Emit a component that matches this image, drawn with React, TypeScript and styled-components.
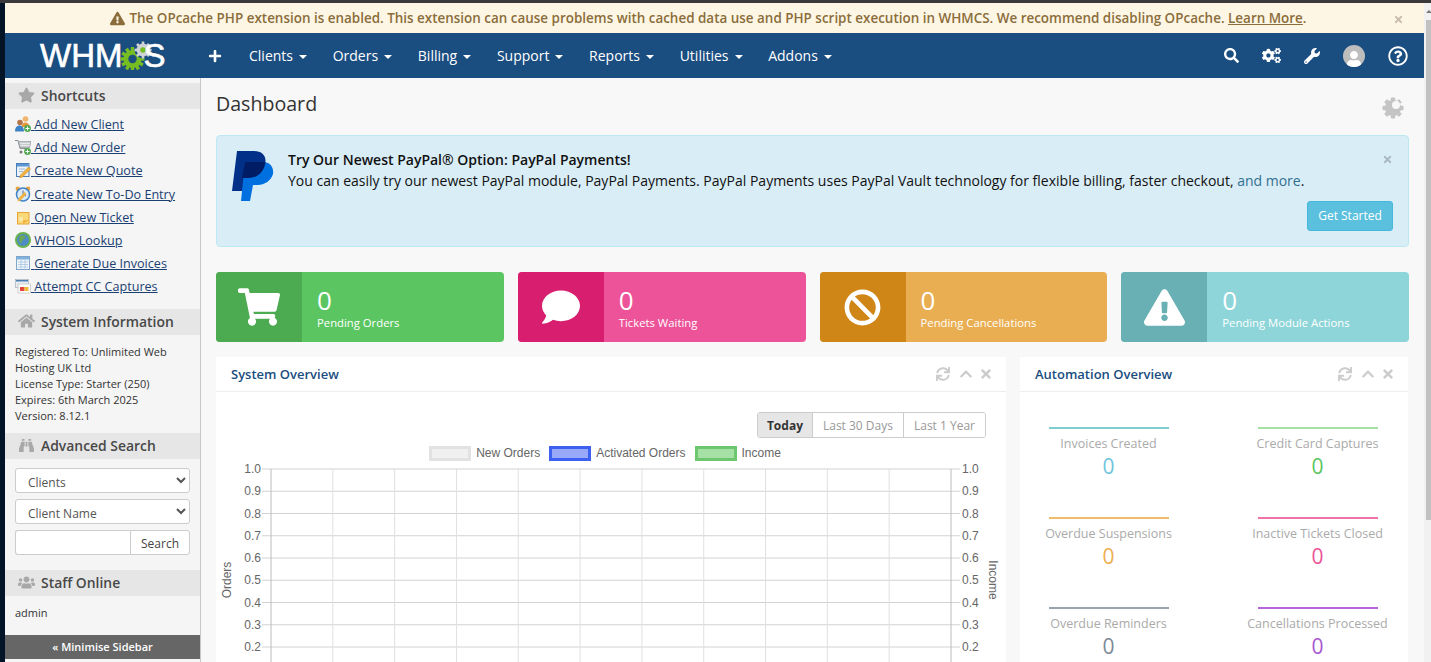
import React from "react";
import styled, { createGlobalStyle } from "styled-components";
import {
  FaPlus,
  FaSearch,
  FaCogs,
  FaWrench,
  FaRegQuestionCircle,
  FaStar,
  FaHome,
  FaBinoculars,
  FaUsers,
  FaShoppingCart,
  FaComment,
  FaBan,
  FaExclamationTriangle,
  FaSync,
  FaChevronUp,
  FaTimes,
  FaUser,
} from "react-icons/fa";

const GlobalStyle = createGlobalStyle`
  html, body {
    margin: 0;
    height: 100%;
    overflow: hidden;
    background: #f8f8f8;
    font-family: "Open Sans", "Liberation Sans", sans-serif;
    font-size: 13px;
    color: #333;
  }
  * { box-sizing: border-box; }
`;

const shortcuts = [
  { label: "Add New Client", icon: "client" },
  { label: "Add New Order", icon: "order" },
  { label: "Create New Quote", icon: "quote" },
  { label: "Create New To-Do Entry", icon: "todo" },
  { label: "Open New Ticket", icon: "ticket" },
  { label: "WHOIS Lookup", icon: "whois" },
  { label: "Generate Due Invoices", icon: "invoice" },
  { label: "Attempt CC Captures", icon: "cc" },
];

const navItems = ["Clients", "Orders", "Billing", "Support", "Reports", "Utilities", "Addons"];

const stats = [
  { label: "Pending Orders", dark: "#4cab50", light: "#5bc661", icon: <FaShoppingCart size={42} /> },
  { label: "Tickets Waiting", dark: "#d81e6e", light: "#ec5398", icon: <FaComment size={38} /> },
  { label: "Pending Cancellations", dark: "#d08617", light: "#e9ae52", icon: <FaBan size={37} /> },
  { label: "Pending Module Actions", dark: "#69b0b5", light: "#8dd5d8", icon: <FaExclamationTriangle size={41} /> },
];

const automation = [
  { label: "Invoices Created", color: "#7ecdd1", value: "#70c4dc" },
  { label: "Credit Card Captures", color: "#a5e0a5", value: "#5bc661" },
  { label: "Overdue Suspensions", color: "#f0bc6c", value: "#eeae52" },
  { label: "Inactive Tickets Closed", color: "#ef72a8", value: "#ec5398" },
  { label: "Overdue Reminders", color: "#9aa3ab", value: "#7c8a96" },
  { label: "Cancellations Processed", color: "#b565d8", value: "#a957d0" },
];

const yTicks = ["1.0", "0.9", "0.8", "0.7", "0.6", "0.5", "0.4", "0.3", "0.2"];
const gearAngles = [0, 45, 90, 135];
const greenAngles = [0, 30, 60, 90, 120, 150];

function ShortcutIcon({ kind }: { kind: string }) {
  switch (kind) {
    case "client":
      return (
        <svg width="16" height="16" viewBox="0 0 16 16">
          <circle cx="10.5" cy="3" r="2.8" fill="#eeb56c" />
          <path d="M6.5 11c0-3 2-4.5 4-4.5s4 1.5 4 4.5z" fill="#e8963a" />
          <circle cx="5" cy="6.5" r="2.8" fill="#b5764a" />
          <path d="M0 15.5c0-4 2-6 4.5-6s4.5 2 4.5 6z" fill="#3f83c6" />
          <circle cx="12.5" cy="12.5" r="3.4" fill="#4fa84f" />
          <path d="M12 10.5h1v1.5h1.5v1h-1.5v1.5h-1v-1.5h-1.5v-1h1.5z" fill="#fff" />
        </svg>
      );
    case "order":
      return (
        <svg width="16" height="16" viewBox="0 0 16 16">
          <path d="M0 1.5h3l2 8h8" fill="none" stroke="#8b8f92" strokeWidth="1" />
          <path d="M3.5 2.5h12.5l-1.5 6h-9.5z" fill="#c9ccce" stroke="#8b8f92" strokeWidth="0.6" />
          <path d="M5 4.5h10M5.5 6.5h9" stroke="#f2f2f2" strokeWidth="0.7" />
          <circle cx="6" cy="13" r="1.5" fill="#777" />
          <circle cx="12.5" cy="12.5" r="3.4" fill="#4fa84f" />
          <path d="M12 10.5h1v1.5h1.5v1h-1.5v1.5h-1v-1.5h-1.5v-1h1.5z" fill="#fff" />
        </svg>
      );
    case "quote":
      return (
        <svg width="16" height="16" viewBox="0 0 16 16">
          <rect x="1.5" y="1.5" width="12.5" height="13" fill="#eaf2fb" stroke="#4a7fb8" />
          <rect x="2" y="2" width="11.5" height="2.5" fill="#5b95d2" />
          <path d="M4 7h6M4 9.5h4" stroke="#9fb9d6" />
          <path d="M13.5 5l2 2-8 8-3 1 1-3z" fill="#efb23e" stroke="#c98a22" strokeWidth="0.5" />
        </svg>
      );
    case "todo":
      return (
        <svg width="16" height="16" viewBox="0 0 16 16">
          <circle cx="2.8" cy="2.8" r="2.2" fill="#e8a33a" />
          <circle cx="13" cy="2.8" r="2.2" fill="#e8a33a" />
          <circle cx="8" cy="8.5" r="6.5" fill="#dbeafa" stroke="#3f83c6" strokeWidth="1.5" />
          <path d="M8 4.5v4l3 1.5" fill="none" stroke="#4a6a8a" />
          <path d="M9.5 6l2 2-6 6.5-3 1 1-3z" fill="#efb23e" />
        </svg>
      );
    case "ticket":
      return (
        <svg width="16" height="16" viewBox="0 0 16 16">
          <rect x="2.5" y="3.5" width="11.5" height="11.5" fill="#f9d877" stroke="#e8a33a" />
          <path d="M8 15v-4h6z" fill="#f3b43f" />
          <rect x="4" y="8" width="4" height="4" fill="#fbe7a8" />
        </svg>
      );
    case "whois":
      return (
        <svg width="16" height="16" viewBox="0 0 16 16">
          <circle cx="8" cy="8" r="8" fill="#6bb24f" />
          <circle cx="8" cy="8" r="6" fill="#4d8cc4" />
          <path d="M5 4c2-1 4-1 5 .5s-1 3-2 3-.5 3-2 3.5S3 6 5 4z" fill="#6aa75a" />
        </svg>
      );
    case "invoice":
      return (
        <svg width="16" height="16" viewBox="0 0 16 16">
          <rect x="1.5" y="1.5" width="13" height="13" fill="#eef5fb" stroke="#7fa6c9" />
          <rect x="2" y="2" width="12" height="2.5" fill="#7fb2dc" />
          <path d="M3 7h10M3 9.5h10M3 12h10M6 5v8.5M10 5v8.5" stroke="#a9c5dc" strokeWidth="0.8" />
        </svg>
      );
    default:
      return (
        <svg width="16" height="16" viewBox="0 0 16 16">
          <rect x="0.5" y="1.5" width="13" height="8" fill="#e9eef2" stroke="#9aa5ad" strokeWidth="0.6" />
          <rect x="1" y="2" width="12" height="1.5" fill="#4d7fb0" />
          <rect x="3" y="6" width="12.5" height="9" fill="#fff" stroke="#b5b5b5" strokeWidth="0.6" />
          <rect x="5" y="9" width="4.5" height="4" fill="#e0483c" />
          <rect x="9.5" y="9" width="4" height="4" fill="#f0b93a" />
        </svg>
      );
  }
}

function Logo() {
  return (
    <LogoWrap>
      <LogoText>WHM</LogoText>
      <LogoGear width="33" height="29" viewBox="0 0 33 29">
        <g fill="#76bd22">
          <circle cx="12.5" cy="18" r="9" />
          {greenAngles.map((a) => (
            <rect key={a} x="10.8" y="6" width="3.4" height="24" transform={`rotate(${a} 12.5 18)`} />
          ))}
        </g>
        <circle cx="12.5" cy="18" r="4.2" fill="#1a4d80" />
        <circle cx="23" cy="9" r="8.5" fill="#1a4d80" />
        <g fill="#d0d3d6">
          <circle cx="23" cy="9" r="6.5" />
          {gearAngles.map((a) => (
            <rect key={a} x="21.7" y="0.5" width="2.6" height="17" transform={`rotate(${a} 23 9)`} />
          ))}
        </g>
        <circle cx="23" cy="9" r="2.8" fill="#76bd22" />
      </LogoGear>
      <LogoTail>S</LogoTail>
    </LogoWrap>
  );
}

function PayPalMark() {
  return (
    <svg width="42" height="50" viewBox="0 0 42 50">
      <path d="M5 0H22C31 0 35 6 33 13C31 24 24 28 15 28H13L11 40H0Z" fill="#003087" />
      <path d="M13 11H31C38 11 42 16 41 23C39 30 32 34 26 34H21L18 50H9Z" fill="#0070e0" />
      <path d="M13 11H33.5C32 22 25 27 15 27H10Z" fill="#001c64" />
    </svg>
  );
}

function PageCog() {
  return (
    <CogSvg width="22" height="22" viewBox="0 0 22 22">
      <g fill="#c4c4c4">
        <circle cx="11" cy="11" r="8" />
        {gearAngles.map((a) => (
          <rect key={a} x="8.8" y="0.5" width="4.4" height="21" rx="1" transform={`rotate(${a} 11 11)`} />
        ))}
      </g>
      <circle cx="14" cy="8" r="4" fill="#f8f8f8" />
    </CogSvg>
  );
}

function PanelControls() {
  return (
    <Controls>
      <FaSync size={14} />
      <FaChevronUp size={14} />
      <FaTimes size={14} />
    </Controls>
  );
}

function OverviewChart() {
  const width = 790;
  const height = 232;
  const left = 55;
  const right = 735;
  const top = 8;
  const step = 22.25;
  const columns = 11;
  const colWidth = (right - left) / columns;
  return (
    <svg width={width} height={height} viewBox={`0 0 ${width} ${height}`}>
      {yTicks.map((tick, i) => {
        const y = top + step * i;
        return (
          <g key={tick}>
            <line x1={left - 9} x2={right + 9} y1={y} y2={y} stroke="#d2d2d2" />
            <text x={left - 10} y={y + 4} textAnchor="end" fontSize="12" fill="#666" fontFamily="Liberation Sans">{tick}</text>
            <text x={right + 11} y={y + 4} fontSize="12" fill="#666" fontFamily="Liberation Sans">{tick}</text>
          </g>
        );
      })}
      {Array.from({ length: columns + 1 }).map((_, i) => (
        <line
          key={i}
          x1={left + colWidth * i}
          x2={left + colWidth * i}
          y1={top}
          y2={height}
          stroke={i === 0 || i === columns ? "#bbb" : "#e0e0e0"}
        />
      ))}
      <text transform="translate(15 119) rotate(-90)" textAnchor="middle" fontSize="12" fill="#666" fontFamily="Liberation Sans">Orders</text>
      <text transform="translate(773 119) rotate(90)" textAnchor="middle" fontSize="12" fill="#666" fontFamily="Liberation Sans">Income</text>
    </svg>
  );
}

export default function App() {
  return (
    <Frame>
      <GlobalStyle />
      <TopStrip />
      <Window>
        <LeftStrip />
        <Page>
          <Notice>
            <FaExclamationTriangle size={15} />
            <span>
              The OPcache PHP extension is enabled. This extension can cause problems with cached data use and PHP
              script execution in WHMCS. We recommend disabling OPcache. <u>Learn More</u>.
            </span>
            <NoticeClose>
              <FaTimes size={11} />
            </NoticeClose>
          </Notice>
          <Navbar>
            <Logo />
            <AddButton>
              <FaPlus size={14} />
            </AddButton>
            <NavList>
              {navItems.map((item) => (
                <NavItem key={item}>
                  {item}
                  <Caret />
                </NavItem>
              ))}
            </NavList>
            <NavTools>
              <FaSearch size={15} />
              <FaCogs size={19} />
              <FaWrench size={16} />
              <Avatar>
                <FaUser size={16} />
              </Avatar>
              <FaRegQuestionCircle size={20} />
            </NavTools>
          </Navbar>
          <Body>
            <Sidebar>
              <SideHeading>
                <FaStar size={16} />
                Shortcuts
              </SideHeading>
              <ShortcutList>
                {shortcuts.map((item) => (
                  <ShortcutLink key={item.label}>
                    <ShortcutIcon kind={item.icon} /> {item.label}
                  </ShortcutLink>
                ))}
              </ShortcutList>
              <SideHeading>
                <FaHome size={16} />
                System Information
              </SideHeading>
              <SideText>
                Registered To: Unlimited Web Hosting UK Ltd
                <br />
                License Type: Starter (250)
                <br />
                Expires: 6th March 2025
                <br />
                Version: 8.12.1
              </SideText>
              <SideHeading>
                <FaBinoculars size={15} />
                Advanced Search
              </SideHeading>
              <SearchForm>
                <SideSelect defaultValue="Clients">
                  <option>Clients</option>
                </SideSelect>
                <SideSelect defaultValue="Client Name">
                  <option>Client Name</option>
                </SideSelect>
                <SearchRow>
                  <SearchInput />
                  <SearchButton>Search</SearchButton>
                </SearchRow>
              </SearchForm>
              <SideHeading>
                <FaUsers size={17} />
                Staff Online
              </SideHeading>
              <StaffText>admin</StaffText>
              <Minimise>« Minimise Sidebar</Minimise>
            </Sidebar>
            <Content>
              <TitleRow>
                <Title>Dashboard</Title>
                <PageCog />
              </TitleRow>
              <PromoBox>
                <PayPalMark />
                <PromoText>
                  <PromoHeading>Try Our Newest PayPal® Option: PayPal Payments!</PromoHeading>
                  <br />
                  You can easily try our newest PayPal module, PayPal Payments. PayPal Payments uses PayPal Vault
                  technology for flexible billing, faster checkout, <PromoMore>and more</PromoMore>.
                </PromoText>
                <PromoClose>
                  <FaTimes size={11} />
                </PromoClose>
                <PromoButton>Get Started</PromoButton>
              </PromoBox>
              <StatGrid>
                {stats.map((stat) => (
                  <StatCard key={stat.label} $bg={stat.light}>
                    <StatIcon $bg={stat.dark}>{stat.icon}</StatIcon>
                    <StatBody>
                      <StatValue>0</StatValue>
                      <StatLabel>{stat.label}</StatLabel>
                    </StatBody>
                  </StatCard>
                ))}
              </StatGrid>
              <PanelRow>
                <Panel>
                  <PanelHead>
                    <PanelTitle>System Overview</PanelTitle>
                    <PanelControls />
                  </PanelHead>
                  <ChartBody>
                    <RangeGroup>
                      <RangeButton $active>Today</RangeButton>
                      <RangeButton>Last 30 Days</RangeButton>
                      <RangeButton>Last 1 Year</RangeButton>
                    </RangeGroup>
                    <Legend>
                      <LegendItem>
                        <LegendSwatch $border="#e2e2e2" $fill="#f0f0f0" />
                        New Orders
                      </LegendItem>
                      <LegendItem>
                        <LegendSwatch $border="#3e60f0" $fill="#97a9f8" />
                        Activated Orders
                      </LegendItem>
                      <LegendItem>
                        <LegendSwatch $border="#6cc76f" $fill="#a5e0a5" />
                        Income
                      </LegendItem>
                    </Legend>
                    <OverviewChart />
                  </ChartBody>
                </Panel>
                <Panel>
                  <PanelHead>
                    <PanelTitle>Automation Overview</PanelTitle>
                    <PanelControls />
                  </PanelHead>
                  <AutomationGrid>
                    {automation.map((item) => (
                      <AutoStat key={item.label}>
                        <AutoRule $color={item.color} />
                        <AutoLabel>{item.label}</AutoLabel>
                        <AutoValue $color={item.value}>0</AutoValue>
                      </AutoStat>
                    ))}
                  </AutomationGrid>
                </Panel>
              </PanelRow>
            </Content>
          </Body>
        </Page>
        <Scrollbar>
          <ScrollArrow />
          <ScrollThumb />
        </Scrollbar>
      </Window>
    </Frame>
  );
}

const Frame = styled.div`
  height: 662px;
  display: flex;
  flex-direction: column;
  overflow: hidden;
`;

const TopStrip = styled.div`
  height: 3px;
  flex: none;
  background: #3a3a3a;
`;

const Window = styled.div`
  flex: 1;
  min-height: 0;
  display: flex;
`;

const LeftStrip = styled.div`
  width: 5px;
  flex: none;
  background: #041427;
`;

const Page = styled.div`
  flex: 1;
  min-width: 0;
  display: flex;
  flex-direction: column;
`;

const Scrollbar = styled.div`
  width: 7px;
  flex: none;
  background: #f1f1f1;
  display: flex;
  flex-direction: column;
`;

const ScrollArrow = styled.div`
  height: 17px;
  flex: none;
  display: flex;
  align-items: center;
  justify-content: center;
  padding-left: 2px;
  &::after {
    content: "";
    border-left: 3px solid transparent;
    border-right: 3px solid transparent;
    border-bottom: 3px solid #777;
  }
`;

const ScrollThumb = styled.div`
  height: 500px;
  margin-left: 2px;
  background: #c1c1c1;
`;

const Notice = styled.div`
  height: 30px;
  flex: none;
  background: #fef6e4;
  color: #8a6d3b;
  font-size: 13.45px;
  font-weight: 600;
  display: flex;
  align-items: center;
  justify-content: center;
  gap: 4px;
  padding: 0 12px 0 0;
  position: relative;
  white-space: nowrap;
`;

const NoticeClose = styled.span`
  position: absolute;
  right: 20px;
  top: 8px;
  color: #c9bdb0;
`;

const Navbar = styled.div`
  height: 45px;
  flex: none;
  background: #1a4d80;
  color: #fff;
  display: flex;
  align-items: center;
`;

const LogoWrap = styled.div`
  width: 196px;
  height: 100%;
  flex: none;
  padding-left: 35px;
  display: flex;
  align-items: center;
`;

const LogoText = styled.span`
  font-family: "Liberation Sans", sans-serif;
  font-size: 33px;
  line-height: 33px;
  -webkit-text-stroke: 0.6px #fff;
`;

const LogoGear = styled.svg`
  flex: none;
  margin-left: -2px;
`;

const LogoTail = styled(LogoText)`
  margin-left: -10px;
`;

const AddButton = styled.span`
  width: 40px;
  padding-right: 12px;
  display: flex;
  justify-content: center;
`;

const NavList = styled.div`
  display: flex;
  gap: 25.7px;
  margin-left: 8px;
  flex: 1;
`;

const NavItem = styled.span`
  font-size: 14px;
  display: inline-flex;
  align-items: center;
  gap: 6px;
`;

const Caret = styled.i`
  width: 0;
  height: 0;
  border-left: 4px solid transparent;
  border-right: 4px solid transparent;
  border-top: 4px solid #fff;
  margin-top: 2px;
`;

const NavTools = styled.div`
  display: flex;
  align-items: center;
  gap: 23px;
  padding-right: 16px;
`;

const Avatar = styled.span`
  width: 22px;
  height: 22px;
  border-radius: 50%;
  background: #bdbdbd;
  overflow: hidden;
  display: flex;
  align-items: flex-end;
  justify-content: center;
`;

const Body = styled.div`
  flex: 1;
  min-height: 0;
  display: flex;
  background: #f8f8f8;
`;

const Sidebar = styled.aside`
  width: 196px;
  flex: none;
  background: #f5f5f5;
  border-right: 1px solid #c8c8c8;
  padding-top: 5px;
  display: flex;
  flex-direction: column;
  overflow: hidden;
`;

const SideHeading = styled.div`
  height: 26px;
  flex: none;
  background: #e6e6e6;
  color: #484848;
  font-size: 13.9px;
  font-weight: 600;
  display: flex;
  align-items: center;
  gap: 6px;
  padding: 0 0 2px 13px;
  svg {
    color: #a8a8a8;
    width: 17px;
  }
`;

const ShortcutList = styled.div`
  height: 200px;
  flex: none;
  padding: 7px 10px 0;
  display: flex;
  flex-direction: column;
  align-items: flex-start;
`;

const ShortcutLink = styled.a`
  height: 23.2px;
  color: #1a3f73;
  font-size: 12.6px;
  text-decoration: underline;
  white-space: nowrap;
  svg {
    vertical-align: -3px;
  }
`;

const SideText = styled.div`
  height: 98px;
  flex: none;
  padding: 9px 10px 0;
  font-size: 11px;
  line-height: 16px;
  color: #333;
`;

const SearchForm = styled.div`
  height: 111px;
  flex: none;
  padding: 9px 10px 0;
  display: flex;
  flex-direction: column;
  gap: 6px;
`;

const SideSelect = styled.select`
  height: 25px;
  width: 100%;
  background: #fff;
  border: 1px solid #ccc;
  border-radius: 3px;
  color: #555;
  font-family: inherit;
  font-size: 12px;
  padding: 3px 0 0 8px;
`;

const SearchRow = styled.div`
  display: flex;
  height: 25px;
`;

const SearchInput = styled.input`
  flex: 1;
  min-width: 0;
  background: #fff;
  border: 1px solid #ccc;
  border-right: 0;
  border-radius: 3px 0 0 3px;
`;

const SearchButton = styled.button`
  width: 60px;
  background: #fff;
  border: 1px solid #ccc;
  border-radius: 0 3px 3px 0;
  color: #444;
  font-family: inherit;
  font-size: 12px;
  padding: 2px 0 0;
`;

const StaffText = styled.div`
  height: 39px;
  flex: none;
  padding: 9px 10px 0;
  font-size: 11px;
  line-height: 16px;
`;

const Minimise = styled.div`
  height: 24px;
  flex: none;
  background: #666;
  color: #fff;
  font-size: 11px;
  font-weight: 600;
  display: flex;
  align-items: center;
  justify-content: center;
  padding-bottom: 1px;
`;

const Content = styled.main`
  flex: 1;
  min-width: 0;
  padding: 0 15px;
  overflow: hidden;
`;

const TitleRow = styled.div`
  height: 57px;
  display: flex;
  align-items: flex-start;
  justify-content: space-between;
  padding-top: 11px;
`;

const CogSvg = styled.svg`
  margin-top: 8px;
  margin-right: 5px;
`;

const Title = styled.h1`
  margin: 0;
  font-size: 19.6px;
  font-weight: 400;
  line-height: 29px;
  color: #333;
`;

const PromoBox = styled.div`
  height: 112px;
  background: #d9edf7;
  border: 1px solid #bce8f1;
  border-radius: 4px;
  padding: 15px 15px 0;
  display: flex;
  gap: 14px;
  position: relative;
`;

const PromoText = styled.div`
  font-size: 14px;
  line-height: 21px;
  color: #111;
  margin-top: -2px;
  white-space: nowrap;
`;

const PromoHeading = styled.span`
  font-weight: 600;
`;

const PromoMore = styled.span`
  color: #31708f;
`;

const PromoClose = styled.span`
  position: absolute;
  top: 15px;
  right: 15px;
  color: #aab8c0;
`;

const PromoButton = styled.button`
  position: absolute;
  right: 15px;
  bottom: 15px;
  width: 86px;
  height: 30px;
  background: #5bc0de;
  border: 1px solid #46b8da;
  border-radius: 3px;
  color: #fff;
  font-family: inherit;
  font-size: 12px;
  padding: 0 0 2px;
`;

const StatGrid = styled.div`
  display: grid;
  grid-template-columns: repeat(4, 1fr);
  gap: 14px;
  margin-top: 25px;
`;

const StatCard = styled.div<{ $bg: string }>`
  height: 70px;
  display: flex;
  background: ${({ $bg }) => $bg};
  border-radius: 4px;
  overflow: hidden;
  color: #fff;
`;

const StatIcon = styled.div<{ $bg: string }>`
  width: 86px;
  flex: none;
  background: ${({ $bg }) => $bg};
  display: flex;
  align-items: center;
  justify-content: center;
`;

const StatBody = styled.div`
  padding: 12px 0 0 15px;
`;

const StatValue = styled.div`
  font-size: 26px;
  line-height: 32px;
`;

const StatLabel = styled.div`
  font-size: 11.3px;
  line-height: 14px;
  font-weight: 500;
`;

const PanelRow = styled.div`
  display: grid;
  grid-template-columns: 790px 388px;
  gap: 14px;
  margin-top: 15px;
`;

const Panel = styled.section`
  background: #fff;
  height: 400px;
`;

const PanelHead = styled.div`
  height: 35px;
  border-bottom: 1px solid #eee;
  padding: 0 13px 0 15px;
  display: flex;
  align-items: center;
  justify-content: space-between;
`;

const PanelTitle = styled.h3`
  margin: 0;
  font-size: 13px;
  font-weight: 600;
  color: #1a4d80;
`;

const Controls = styled.div`
  display: flex;
  gap: 6px;
  color: #ccc;
  svg:first-child {
    margin-right: 3px;
  }
`;

const ChartBody = styled.div`
  padding-top: 20px;
  display: flex;
  flex-direction: column;
`;

const RangeGroup = styled.div`
  align-self: flex-end;
  margin-right: 20px;
  display: flex;
  height: 26px;
  border: 1px solid #ccc;
  border-radius: 3px;
  overflow: hidden;
`;

const RangeButton = styled.span<{ $active?: boolean }>`
  padding: 0 ${({ $active }) => ($active ? "9px" : "10px")};
  display: flex;
  align-items: center;
  font-size: 12px;
  color: ${({ $active }) => ($active ? "#333" : "#999")};
  font-weight: ${({ $active }) => ($active ? 700 : 400)};
  background: ${({ $active }) => ($active ? "#e6e6e6" : "#fff")};
  & + & {
    border-left: 1px solid #ccc;
  }
`;

const Legend = styled.div`
  display: flex;
  justify-content: center;
  gap: 9px;
  margin: 7px 12px 0 0;
  height: 16px;
  font-family: "Liberation Sans", sans-serif;
  font-size: 12px;
  color: #666;
`;

const LegendItem = styled.span`
  display: inline-flex;
  align-items: center;
  gap: 5px;
`;

const LegendSwatch = styled.i<{ $border: string; $fill: string }>`
  width: 42px;
  height: 15px;
  border: 3px solid ${({ $border }) => $border};
  background: ${({ $fill }) => $fill};
`;

const AutomationGrid = styled.div`
  display: grid;
  grid-template-columns: 178px 178px;
  justify-content: center;
  column-gap: 31px;
  row-gap: 20px;
  padding: 35px 2px 0 0;
`;

const AutoStat = styled.div`
  height: 70px;
  display: flex;
  flex-direction: column;
  align-items: center;
  white-space: nowrap;
`;

const AutoRule = styled.i<{ $color: string }>`
  width: 120px;
  height: 2px;
  flex: none;
  background: ${({ $color }) => $color};
`;

const AutoLabel = styled.div`
  margin-top: 6px;
  font-size: 12.5px;
  line-height: 18px;
  color: #aaa;
`;

const AutoValue = styled.div<{ $color: string }>`
  font-size: 21px;
  line-height: 26px;
  color: ${({ $color }) => $color};
`;
